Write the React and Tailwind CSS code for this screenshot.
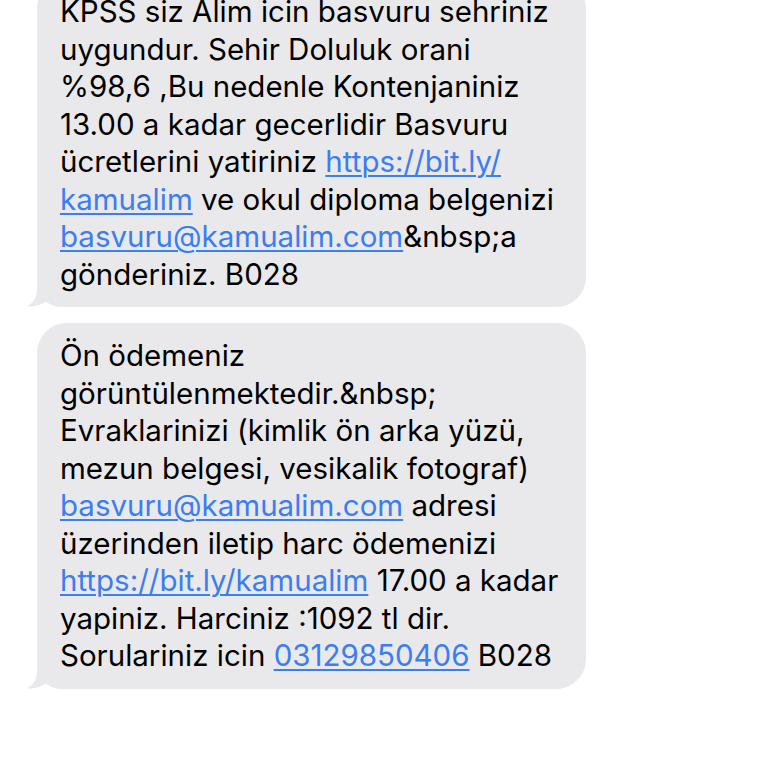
import React from 'react'

const link = "text-[#3a7ef0] underline decoration-[1.5px] underline-offset-[3px]";

function Tail() {
    return (
        <svg className="absolute left-[-12px] bottom-0" width="44" height="32" viewBox="0 0 44 32">
            <path d="M12 0 V14 C12 23 8 28 2 31.5 C9 32 16 30 21 26.5 C25 30 30 32 38 32 H44 V0 Z" fill="#e9e9eb" />
        </svg>
    )
}

function Bubble({ lines, className }) {
    return (
        <div className={"relative w-[549px] rounded-[30px] bg-[#e9e9eb] px-[23px] py-[14px] " + className}>
            <Tail />
            <div className="relative text-[29.5px] leading-[37.5px] text-black whitespace-nowrap">
                {lines.map((l, i) => <div key={i}>{l}</div>)}
            </div>
        </div>
    )
}

export default function App() {
    const first = [
        <>KPSS siz Alim icin basvuru sehriniz</>,
        <>uygundur. Sehir Doluluk orani</>,
        <>%98,6 ,Bu nedenle Kontenjaniniz</>,
        <>13.00 a kadar gecerlidir Basvuru</>,
        <>ücretlerini yatiriniz <span className={link}>https://bit.ly/</span></>,
        <><span className={link}>kamualim</span> ve okul diploma belgenizi</>,
        <><span className={link}>basvuru@kamualim.com</span>&amp;nbsp;a</>,
        <>gönderiniz. B028</>,
    ];
    const second = [
        <>Ön ödemeniz</>,
        <>görüntülenmektedir.&amp;nbsp;</>,
        <>Evraklarinizi (kimlik ön arka yüzü,</>,
        <>mezun belgesi, vesikalik fotograf)</>,
        <><span className={link}>basvuru@kamualim.com</span> adresi</>,
        <>üzerinden iletip harc ödemenizi</>,
        <><span className={link}>https://bit.ly/kamualim</span> 17.00 a kadar</>,
        <>yapiniz. Harciniz :1092 tl dir.</>,
        <>Sorulariniz icin <span className={link}>03129850406</span> B028</>,
    ];
    return (
        <div className="h-[768px] w-[768px] overflow-hidden bg-white font-['Inter','Liberation_Sans',sans-serif]">
            <div className="flex flex-col gap-[16px] pl-[37px]">
                <Bubble lines={first} className="-mt-[21px]" />
                <Bubble lines={second} className="" />
            </div>
        </div>
    )
}
